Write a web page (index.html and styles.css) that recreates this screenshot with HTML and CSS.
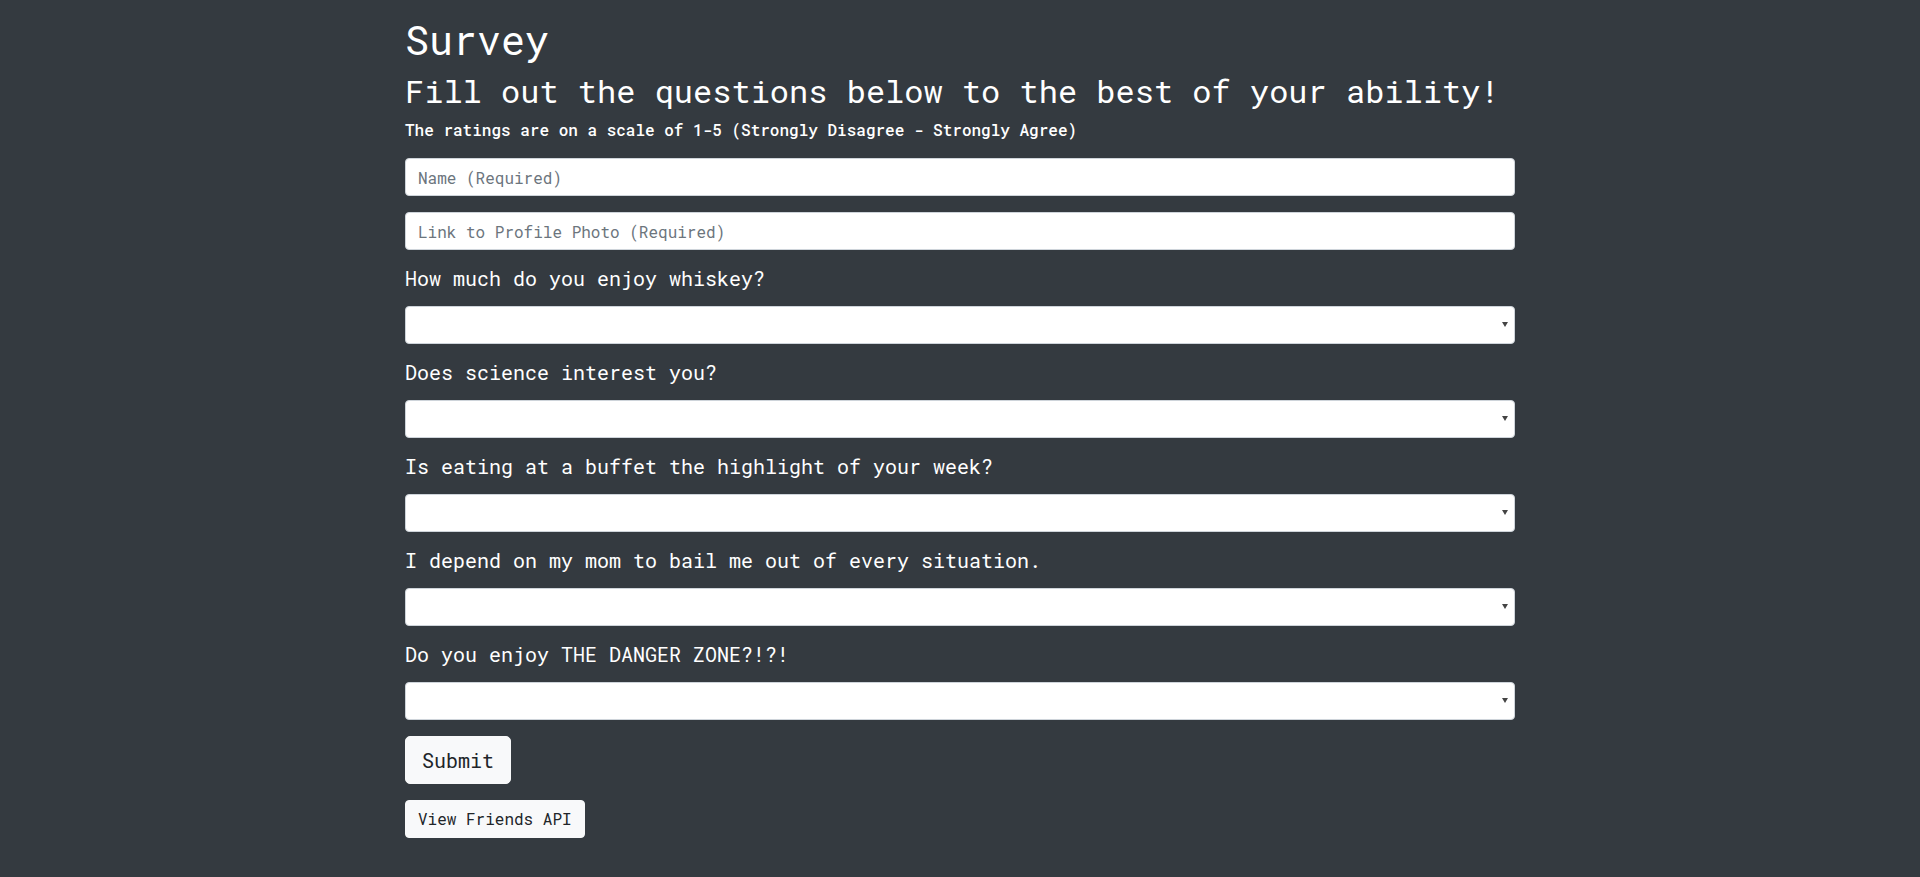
FILE: index.html
```html
<!DOCTYPE html>
<html lang="en">
<head>
<meta charset="utf-8">
<title>Survey</title>
<link rel="stylesheet" href="styles.css">
</head>
<body>
<div class="container">
  <h1 class="page-title">Survey</h1>
  <h2 class="page-subtitle">Fill out the questions below to the best of your ability!</h2>
  <p class="scale-note">The ratings are on a scale of 1-5 (Strongly Disagree - Strongly Agree)</p>
  <form class="survey-form">
    <div class="form-group">
      <input class="form-control" type="text" placeholder="Name (Required)">
    </div>
    <div class="form-group">
      <input class="form-control" type="text" placeholder="Link to Profile Photo (Required)">
    </div>
    <div class="form-group">
      <label class="question">How much do you enjoy whiskey?</label>
      <div class="select-wrap">
        <select class="form-control"><option></option><option>1</option><option>2</option><option>3</option><option>4</option><option>5</option></select>
      </div>
    </div>
    <div class="form-group">
      <label class="question">Does science interest you?</label>
      <div class="select-wrap">
        <select class="form-control"><option></option><option>1</option><option>2</option><option>3</option><option>4</option><option>5</option></select>
      </div>
    </div>
    <div class="form-group">
      <label class="question">Is eating at a buffet the highlight of your week?</label>
      <div class="select-wrap">
        <select class="form-control"><option></option><option>1</option><option>2</option><option>3</option><option>4</option><option>5</option></select>
      </div>
    </div>
    <div class="form-group">
      <label class="question">I depend on my mom to bail me out of every situation.</label>
      <div class="select-wrap">
        <select class="form-control"><option></option><option>1</option><option>2</option><option>3</option><option>4</option><option>5</option></select>
      </div>
    </div>
    <div class="form-group">
      <label class="question">Do you enjoy THE DANGER ZONE?!?!</label>
      <div class="select-wrap">
        <select class="form-control"><option></option><option>1</option><option>2</option><option>3</option><option>4</option><option>5</option></select>
      </div>
    </div>
    <button class="btn btn-lg" type="button">Submit</button>
  </form>
  <div class="api-link-row">
    <a class="btn" href="#">View Friends API</a>
  </div>
</div>
</body>
</html>
```

FILE: styles.css
```css
html {
  background: #343a40;
}
body {
  margin: 0;
  background: #343a40;
  color: #ffffff;
  font-family: "Roboto Mono", "DejaVu Sans Mono", monospace;
  font-size: 16px;
  line-height: 1.5;
}
.container {
  max-width: 1140px;
  margin: 0 auto;
  padding: 16px 15px 0;
  box-sizing: border-box;
}
.page-title {
  margin: 0 0 8px;
  font-size: 40px;
  line-height: 48px;
  font-weight: 400;
}
.page-subtitle {
  margin: 0 0 8px;
  font-size: 32px;
  line-height: 38px;
  font-weight: 400;
}
.scale-note {
  margin: 0 0 16px;
  font-size: 16px;
  line-height: 24px;
  font-weight: 500;
}
.survey-form {
  margin: 0;
}
.form-group {
  margin-bottom: 16px;
}
.question {
  display: block;
  font-size: 20px;
  line-height: 24px;
  font-weight: 400;
  margin-bottom: 16px;
}
.form-control {
  display: block;
  width: 100%;
  height: 38px;
  box-sizing: border-box;
  padding: 6px 12px;
  font-family: inherit;
  font-size: 16px;
  line-height: 24px;
  color: #495057;
  background: #ffffff;
  border: 1px solid #ced4da;
  border-radius: 4px;
  outline: none;
}
.form-control::placeholder {
  color: #6c757d;
  opacity: 1;
}
select.form-control {
  -webkit-appearance: none;
  appearance: none;
  padding-right: 28px;
}
.select-wrap {
  position: relative;
}
.select-wrap::after {
  content: "";
  position: absolute;
  right: 7px;
  top: 16px;
  width: 0;
  height: 0;
  border-left: 3px solid transparent;
  border-right: 3px solid transparent;
  border-top: 5px solid #444444;
  pointer-events: none;
}
.btn {
  display: inline-block;
  box-sizing: border-box;
  padding: 6px 12px;
  font-family: inherit;
  font-size: 16px;
  line-height: 24px;
  font-weight: 400;
  color: #212529;
  background: #f8f9fa;
  border: 1px solid #f8f9fa;
  border-radius: 4px;
  text-decoration: none;
  cursor: pointer;
}
.btn-lg {
  padding: 8px 16px;
  font-size: 20px;
  line-height: 30px;
  border-radius: 5px;
}
.api-link-row {
  margin-top: 16px;
}
```
